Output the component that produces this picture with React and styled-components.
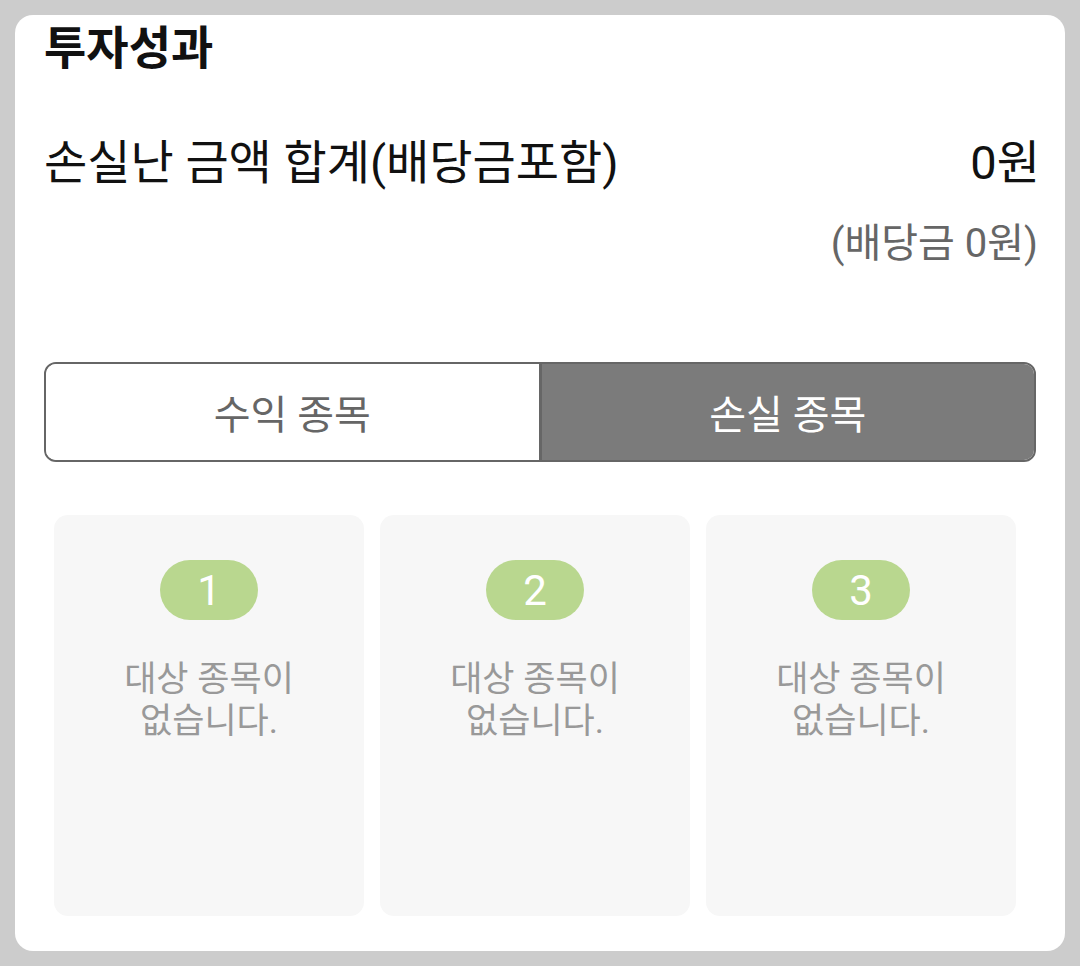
import React, { useState } from "react";
import styled, { createGlobalStyle } from "styled-components";

const GlobalStyle = createGlobalStyle`
  html, body {
    margin: 0;
    padding: 0;
    background: #cccccc;
  }
  body {
    font-family: Roboto, "Noto Sans CJK KR", "Noto Sans", sans-serif;
  }
`;

const Page = styled.div`
  padding: 15px;
  height: 966px;
  box-sizing: border-box;
`;

const Panel = styled.section`
  background: #ffffff;
  border-radius: 18px;
  height: 936px;
  box-sizing: border-box;
  padding: 6px 29px 35px;
  display: flex;
  flex-direction: column;
`;

const Title = styled.h2`
  margin: 0;
  font-size: 46px;
  line-height: 54px;
  font-weight: 700;
  color: #111;
`;

const SumRow = styled.div`
  display: flex;
  justify-content: space-between;
  align-items: center;
  margin: 61px -4px 0 0;
  font-size: 47px;
  line-height: 54px;
  color: #111;
`;

const Dividend = styled.div`
  text-align: right;
  margin: 30px -2px 0 0;
  font-size: 40px;
  line-height: 48px;
  color: #666;
`;

const Tabs = styled.div`
  display: flex;
  margin-top: 94px;
  height: 100px;
  border: 2.5px solid #666;
  border-radius: 12px;
  overflow: hidden;
  box-sizing: border-box;
`;

const Tab = styled.button`
  flex: 1;
  border: none;
  margin: 0;
  padding: 0;
  font-family: inherit;
  font-size: 40px;
  background: ${(p) => (p.$active ? "#7b7b7b" : "#ffffff")};
  color: ${(p) => (p.$active ? "#ffffff" : "#666")};
  & + & {
    border-left: 3px solid #666;
  }
`;

const Grid = styled.div`
  display: grid;
  grid-template-columns: repeat(3, 1fr);
  gap: 16px;
  margin: 53px 20px 0 10px;
  flex: 1;
`;

const Slot = styled.div`
  background: #f7f7f7;
  border-radius: 14px;
  display: flex;
  flex-direction: column;
  align-items: center;
  padding-top: 45px;
`;

const Rank = styled.div`
  width: 98px;
  height: 60px;
  border-radius: 30px;
  background: #b9d78f;
  color: #fff;
  font-size: 42px;
  display: flex;
  align-items: center;
  justify-content: center;
`;

const Empty = styled.p`
  margin: 39px 0 0;
  text-align: center;
  font-size: 35px;
  line-height: 42px;
  color: #999;
`;

export default function App() {
  const [tab, setTab] = useState("loss");
  return (
    <Page>
      <GlobalStyle />
      <Panel>
        <Title>투자성과</Title>
        <SumRow>
          <span>손실난 금액 합계(배당금포함)</span>
          <span>0원</span>
        </SumRow>
        <Dividend>(배당금 0원)</Dividend>
        <Tabs>
          <Tab $active={tab === "gain"} onClick={() => setTab("gain")}>
            수익 종목
          </Tab>
          <Tab $active={tab === "loss"} onClick={() => setTab("loss")}>
            손실 종목
          </Tab>
        </Tabs>
        <Grid>
          {[1, 2, 3].map((n) => (
            <Slot key={n}>
              <Rank>{n}</Rank>
              <Empty>
                대상 종목이
                <br />
                없습니다.
              </Empty>
            </Slot>
          ))}
        </Grid>
      </Panel>
    </Page>
  );
}
